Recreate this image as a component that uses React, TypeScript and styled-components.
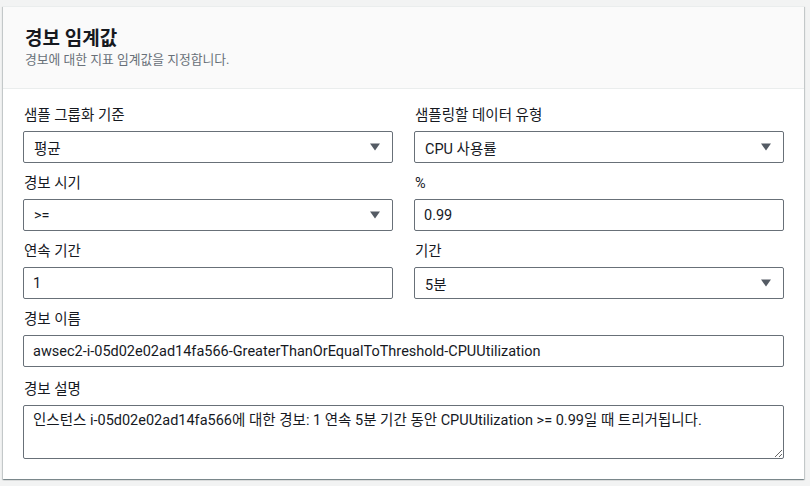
import styled, { createGlobalStyle } from "styled-components";

const FONT = `Roboto, "Noto Sans CJK KR", sans-serif`;

const GlobalStyle = createGlobalStyle`
  html, body {
    margin: 0;
    padding: 0;
    background-color: #f2f3f3;
  }

  body {
    font-family: ${FONT};
    color: #16191f;
  }
`;

const Page = styled.div`
  padding: 6px 6px 7px 3px;
`;

const Card = styled.section`
  width: 801px;
  background-color: #ffffff;
  box-shadow: 0 1px 1px 0 rgba(0, 28, 36, 0.3),
    1px 1px 1px 0 rgba(0, 28, 36, 0.15), -1px 1px 1px 0 rgba(0, 28, 36, 0.15);
  border-top: 1px solid #eaeded;
`;

const Header = styled.header`
  background-color: #fafafa;
  border-bottom: 1px solid #eaeded;
  padding: 20px 20px 19px 22px;
`;

const Title = styled.h2`
  margin: 0;
  font-size: 19px;
  line-height: 24px;
  font-weight: 700;
  color: #16191f;
`;

const Subtitle = styled.p`
  margin: 0;
  font-size: 12.8px;
  line-height: 18px;
  color: #687078;
`;

const Body = styled.div`
  padding: 16px 20px 20px 20px;
  display: flex;
  flex-direction: column;
  gap: 10px;
`;

const Row = styled.div`
  display: grid;
  grid-template-columns: 1fr 1fr;
  column-gap: 21px;
`;

const Field = styled.div<{ $offset?: number }>`
  display: flex;
  flex-direction: column;
  gap: 4px;
  margin-top: ${(p) => p.$offset ?? 0}px;
`;

const Label = styled.label`
  font-size: 14.5px;
  line-height: 22px;
  color: #16191f;
  padding-left: 1px;
`;

const boxStyles = `
  box-sizing: border-box;
  width: 100%;
  border: 1px solid #687078;
  border-radius: 2px;
  background-color: #ffffff;
  font-family: ${FONT};
  font-size: 14.5px;
  color: #16191f;
`;

const SelectBox = styled.div`
  ${boxStyles}
  height: 32px;
  display: flex;
  align-items: center;
  justify-content: space-between;
  padding: 0 11px 0 10px;
`;

const Input = styled.input`
  ${boxStyles}
  height: 32px;
  padding: 0 9px;
  outline: none;
`;

const TextArea = styled.textarea`
  ${boxStyles}
  height: 54px;
  padding: 5px 9px;
  line-height: 20px;
  resize: vertical;
  outline: none;
  display: block;
`;

const Caret = () => (
  <svg width="12" height="8" viewBox="0 0 12 8" aria-hidden="true">
    <path d="M1 0.5 L11 0.5 L6 7.5 Z" fill="#545b64" />
  </svg>
);

function Select({ value }: { value: string }) {
  return (
    <SelectBox>
      <span>{value}</span>
      <Caret />
    </SelectBox>
  );
}

export default function App() {
  return (
    <>
      <GlobalStyle />
      <Page>
        <Card>
          <Header>
            <Title>경보 임계값</Title>
            <Subtitle>경보에 대한 지표 임계값을 지정합니다.</Subtitle>
          </Header>
          <Body>
            <Row>
              <Field>
                <Label>샘플 그룹화 기준</Label>
                <Select value="평균" />
              </Field>
              <Field>
                <Label>샘플링할 데이터 유형</Label>
                <Select value="CPU 사용률" />
              </Field>
            </Row>
            <Row>
              <Field>
                <Label>경보 시기</Label>
                <Select value=">=" />
              </Field>
              <Field>
                <Label>%</Label>
                <Input readOnly value="0.99" />
              </Field>
            </Row>
            <Row>
              <Field>
                <Label>연속 기간</Label>
                <Input readOnly value="1" />
              </Field>
              <Field>
                <Label>기간</Label>
                <Select value="5분" />
              </Field>
            </Row>
            <Field>
              <Label>경보 이름</Label>
              <Input
                readOnly
                value="awsec2-i-05d02e02ad14fa566-GreaterThanOrEqualToThreshold-CPUUtilization"
              />
            </Field>
            <Field $offset={2}>
              <Label>경보 설명</Label>
              <TextArea
                readOnly
                value="인스턴스 i-05d02e02ad14fa566에 대한 경보: 1 연속 5분 기간 동안 CPUUtilization >= 0.99일 때 트리거됩니다."
              />
            </Field>
          </Body>
        </Card>
      </Page>
    </>
  );
}
